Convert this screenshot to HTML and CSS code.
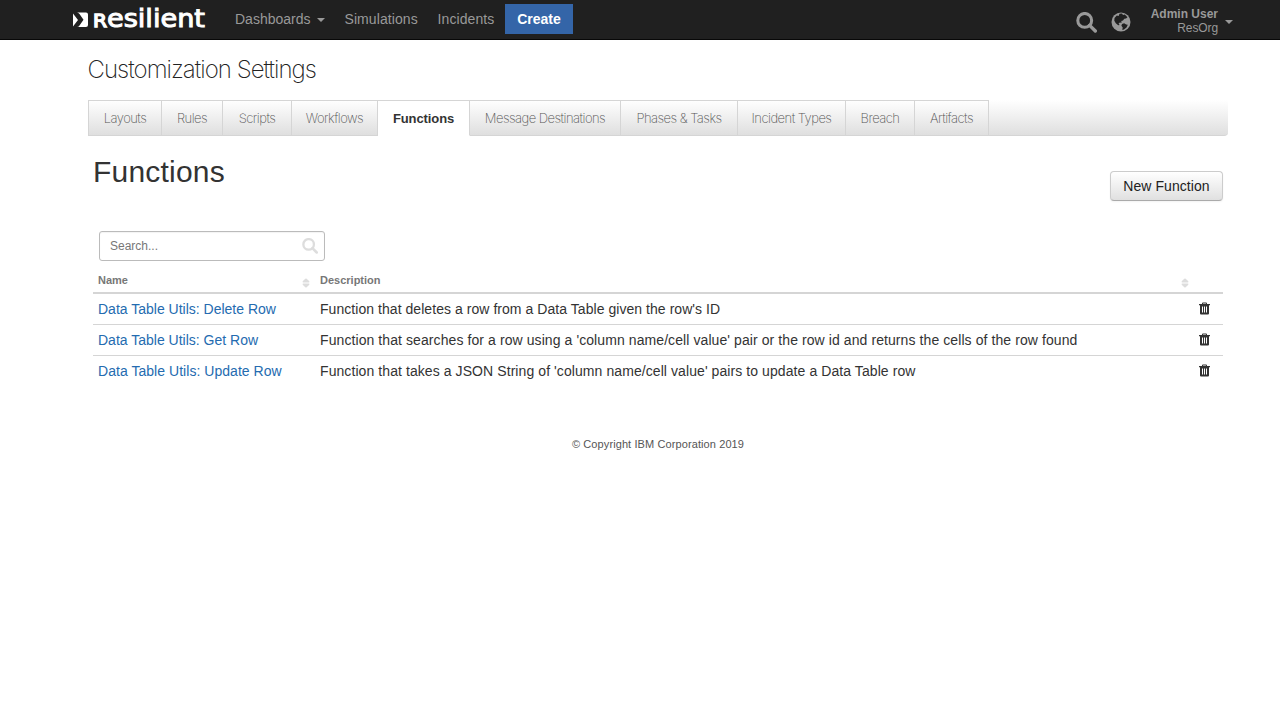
FILE: index.html
```html
<!DOCTYPE html>
<html lang="en">
<head>
<meta charset="utf-8">
<title>Customization Settings</title>
<link rel="stylesheet" href="styles.css">
</head>
<body>
<svg class="defs" width="0" height="0" aria-hidden="true">
  <symbol id="search" viewBox="0 0 20 20"><circle cx="8.3" cy="8" r="6.6" fill="none" stroke="currentColor" stroke-width="2.9"/><path d="M13 12.700l5.400 5.400" stroke="currentColor" stroke-width="3.2" stroke-linecap="round"/></symbol>
  <symbol id="trash" viewBox="0 0 11 13"><path fill="currentColor" fill-rule="evenodd" d="M3 2V1.500Q3 .5 4 .5h3q1 0 1 1V2h3v1.200h-1v8.300q0 1-1 1H2q-1 0-1-1V3.200H0V2zm1 0h3v-.6H4zM3 4.500v6h1v-6zm2 0v6h1v-6zm2 0v6h1v-6z"/></symbol>
  <symbol id="sort" viewBox="0 0 8 10"><path fill="currentColor" d="M3.300.8q.7-.7 1.400 0l2.600 2.500q.5 1.200-.6 1.200H1.300Q.2 4.500.7 3.300zM3.300 9.200q.7.7 1.400 0l2.600-2.500q.5-1.200-.6-1.200H1.300Q.2 5.500.7 6.700z"/></symbol>
</svg>
<header class="topbar">
  <svg class="logo" width="140" height="39" viewBox="0 0 140 39">
    <path fill="#fff" d="M1 13.500l5 6.400L1 26.500zM5 12.500H14q2 0 2 2V25q0 2-2 2H5q1.500 0 2.500-1.500l4-5.700-4-5.800q-1-1.500-2.500-1.500z"/>
    <text class="wordmark" x="21" y="26.500" textLength="112" lengthAdjust="spacingAndGlyphs"><tspan class="initial">R</tspan>esilient</text>
  </svg>
  <nav class="nav">
    <a class="n1">Dashboards<i class="caret"></i></a><a class="n2">Simulations</a><a class="n3">Incidents</a><a class="create">Create</a>
  </nav>
  <div class="tools">
    <svg class="find" width="21" height="21"><use href="#search"/></svg>
    <svg class="globe" width="20" height="20" viewBox="0 0 20 20"><circle cx="10" cy="10" r="9.500" fill="currentColor"/><path fill="#202020" d="M8.500 1.800L11 1.600l1 1.400 1.800-.4 2.700 2.600-1.500 1.400-1.700.2-1.300 1.700-1.700.6.300 1.700-1.800-.2-1.300 1.200 1.200 1.300-1.500.2-2.400-2-1.500-2.600L3.500 6l2.300-2.600 1.800.700zM11 12l2.200-.7 1.900 1.200 1.700.2-1.300 2.700-2.500 2-1.700.5.400-2.400-1.300-1.700z"/></svg>
    <div class="user"><b>Admin User</b><span>ResOrg</span></div>
    <i class="caret"></i>
  </div>
</header>
<main class="page">
  <h1 class="title">Customization Settings</h1>
  <nav class="tabs">
    <a class="t1">Layouts</a><a class="t2">Rules</a><a class="t3">Scripts</a><a class="t4">Workflows</a><a class="active">Functions</a><a class="t6">Message Destinations</a><a class="t7">Phases &amp; Tasks</a><a class="t8">Incident Types</a><a class="t9">Breach</a><a class="t10">Artifacts</a>
  </nav>
  <section class="content">
    <div class="heading"><h2>Functions</h2><button class="new">New Function</button></div>
    <div class="searchbox"><span>Search...</span><svg width="16" height="16"><use href="#search"/></svg></div>
    <div class="row head"><div class="name">Name<svg width="8" height="10"><use href="#sort"/></svg></div><div class="desc">Description<svg width="8" height="10"><use href="#sort"/></svg></div></div>
    <div class="row"><a class="name l1">Data Table Utils: Delete Row</a><div class="desc d1">Function that deletes a row from a Data Table given the row's ID</div><svg class="trash" width="11" height="13"><use href="#trash"/></svg></div>
    <div class="row"><a class="name l2">Data Table Utils: Get Row</a><div class="desc d2">Function that searches for a row using a 'column name/cell value' pair or the row id and returns the cells of the row found</div><svg class="trash" width="11" height="13"><use href="#trash"/></svg></div>
    <div class="row"><a class="name l3">Data Table Utils: Update Row</a><div class="desc d3">Function that takes a JSON String of 'column name/cell value' pairs to update a Data Table row</div><svg class="trash" width="11" height="13"><use href="#trash"/></svg></div>
  </section>
  <footer class="footer">© Copyright IBM Corporation 2019</footer>
</main>
</body>
</html>
```
FILE: styles.css
```css
* { box-sizing: border-box; }
body { margin: 0; background: #fff; color: #333; font: 14px/20px "Liberation Sans", Arial, sans-serif; }
.defs { display: block; }
.topbar { display: flex; height: 40px; padding-left: 72px; background: #202020; border-bottom: 1px solid #080808; color: #999; }
.logo { flex: none; }
.wordmark { font: 25px "DejaVu Sans", sans-serif; fill: #fff; stroke: #fff; stroke-width: 1px; }
.initial { font-size: 18.5px; stroke-width: 1.400px; }
.nav { display: flex; margin-left: 23px; padding-top: 4px; height: 34px; line-height: 30px; white-space: nowrap; }
.n1 { width: 109.500px; letter-spacing: 0; }
.n2 { width: 93px; letter-spacing: .08px; }
.n3 { width: 67.500px; letter-spacing: .1px; }
.caret { display: inline-block; border: 4px solid transparent; border-top-color: currentColor; border-bottom: 0; vertical-align: middle; margin-left: 6px; }
.create { width: 68px; background: #3465a8; color: #fff; font-weight: bold; text-align: center; }
.tools { display: flex; margin-left: auto; padding-right: 47px; }
.find { margin-top: 12px; }
.globe { margin: 12px 0 0 14px; }
.user { width: 87px; margin-top: 7px; display: flex; flex-direction: column; align-items: flex-end; font-size: 12px; line-height: 14px; white-space: nowrap; }
.user span { letter-spacing: -.1px; }
.tools .caret { margin-top: 20px; margin-left: 7px; }
.page { width: 1140px; margin-left: 88px; }
.title { margin: 0; height: 60px; padding-top: 15px; font: 200 24px/30px Inter, sans-serif; letter-spacing: -.96px; text-indent: -.5px; color: #222; }
.tabs { display: flex; height: 36px; background: linear-gradient(#fff, #dfdfdf); border-bottom: 1px solid #d5d5d5; border-radius: 0 0 4px 0; }
.tabs a { height: 36px; border: 1px solid #d5d5d5; border-left: 0; text-align: center; font: 200 13px/35px Inter, sans-serif; letter-spacing: -.52px; color: #555; white-space: nowrap; }
.tabs .t1 { width: 74px; border-left: 1px solid #d5d5d5; }
.t2 { width: 61px; }
.t3 { width: 69px; }
.t4 { width: 86px; }
.tabs .active { width: 92px; background: #fff; border-bottom-color: #fff; color: #333; font: bold 13px/35px "Liberation Sans", Arial, sans-serif; letter-spacing: -.1px; }
.t6 { width: 151px; }
.t7 { width: 117px; }
.t8 { width: 108px; }
.t9 { width: 69px; }
.t10 { width: 74px; }
.content { padding: 16px 5px 0; }
.heading { display: flex; justify-content: space-between; height: 79px; }
.heading h2 { margin: 0; font-size: 30px; font-weight: normal; line-height: 40px; letter-spacing: .2px; }
.new { width: 113px; height: 30px; margin-top: 19px; padding: 0; border: 1px solid #ccc; border-bottom-color: #aaa; border-radius: 4px; background: linear-gradient(#fff, #e0e0e0); box-shadow: 0 1px 2px rgba(0,0,0,.05); color: #222; font: 14px/28px "Liberation Sans", Arial, sans-serif; letter-spacing: .07px; }
.searchbox { display: flex; justify-content: space-between; align-items: center; width: 226px; height: 30px; margin-left: 6px; padding: 0 6px 0 10px; border: 1px solid #bbb; border-radius: 3px; box-shadow: inset 0 1px 1px rgba(0,0,0,.05); font-size: 12px; color: #777; }
.searchbox svg { color: #ddd; margin-bottom: 1px; }
.row { display: flex; align-items: center; height: 31px; padding-left: 5px; border-bottom: 1px solid #d5d5d5; white-space: nowrap; }
.row:last-child { border-bottom-color: transparent; }
.name { width: 222px; color: #246bb0; }
.l3 { letter-spacing: .04px; }
.desc { width: 879px; }
.d1 { letter-spacing: .05px; }
.d2 { letter-spacing: .085px; }
.d3 { letter-spacing: .08px; }
.trash { margin-bottom: 1px; }
.head { height: 33px; padding-top: 6px; border-bottom: 2px solid #d5d5d5; font-size: 11px; font-weight: bold; }
.head .name, .head .desc { display: flex; justify-content: space-between; padding-right: 10px; color: #777; }
.head svg { color: #ddd; margin-top: 8px; }
.footer { margin-top: 47px; text-align: center; font-size: 11px; letter-spacing: .1px; color: #555; }
```
